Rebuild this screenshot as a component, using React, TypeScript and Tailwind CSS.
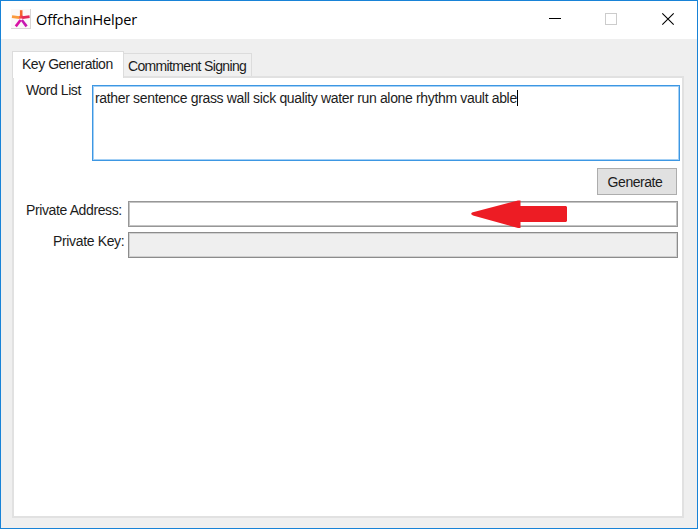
import React from "react";

function Logo() {
  return (
    <svg className="ml-[10px] h-[20px] w-[20px] shrink-0" viewBox="0 0 20 20">
      <defs>
        <linearGradient id="flare" x1="0" y1="0" x2="1" y2="0.3">
          <stop offset="0" stopColor="#fb8a3c" />
          <stop offset="0.5" stopColor="#f4473f" />
          <stop offset="1" stopColor="#e3265c" />
        </linearGradient>
      </defs>
      <rect width="20" height="20" fill="#d9d6d6" />
      <rect width="19" height="19" fill="#fbf8f8" />
      <g fill="none" strokeWidth="2.6">
        <path d="M1 7.6 8.5 8.6" stroke="#fb9a3c" />
        <path d="M10.2 1.2V8" stroke="#f5642c" />
        <path d="M18.6 7.6 11.5 8.6" stroke="#e3285a" />
        <path d="M9.6 11 4.8 17.4" stroke="#d911a5" />
        <path d="M10.8 11 15.6 17.4" stroke="#c818b0" />
      </g>
      <path d="M7.6 7.4 10.2 6 12.8 7.4 12 9.8 10.2 9.6 8.4 9.8Z" fill="url(#flare)" />
    </svg>
  );
}

function TitleBar() {
  return (
    <header className="flex h-[38px] items-start bg-white pt-[8px]">
      <Logo />
      <h1 className="ml-[5px] font-['Open_Sans',sans-serif] text-[14.5px] leading-[21px] tracking-[-0.13px] whitespace-nowrap text-black">
        OffchainHelper
      </h1>
      <svg className="ml-auto h-[20px] w-[157px] shrink-0" viewBox="540 9 157 20" fill="none">
        <path d="M549 18.5h12" stroke="#000" />
        <rect x="605.5" y="13.5" width="11" height="11" stroke="#cccccc" />
        <path d="M662.3 13.3 673.7 24.7M673.7 13.3 662.3 24.7" stroke="#000" strokeWidth="1.1" />
      </svg>
    </header>
  );
}

function Arrow() {
  return (
    <svg className="absolute top-[-3px] left-[341px] h-[29px] w-[98px]" viewBox="470 199 98 29">
      <path
        d="M472 212.5 518 200.5H520.5V206H566L567 207V221L566 222H520.5V228H518L473 215.5 471 214Z"
        fill="#ed1c24"
      />
    </svg>
  );
}

export default function App() {
  return (
    <div className="h-[530px] w-[699px] bg-white">
      <div className="flex h-[529px] w-[698px] flex-col border border-[#1883d7] bg-[#efefef] font-['Liberation_Sans',Arial,sans-serif] text-[14px] leading-[16px] whitespace-nowrap text-[#1c1c1c]">
        <TitleBar />
        <main className="flex flex-col pt-[12px] pl-[11px]">
          <nav className="z-10 flex h-[27px] items-end">
            <div className="h-[27px] w-[112px] border border-b-0 border-[#dcdcdc] bg-white pt-[4px] pl-[9px] tracking-[-0.47px]">
              Key Generation
            </div>
            <div className="mb-[2px] h-[23px] w-[128px] border border-b-0 border-l-0 border-[#dcdcdc] bg-[#f0f0f0] pt-[4px] pl-[4px] tracking-[-0.65px]">
              Commitment Signing
            </div>
          </nav>
          <section className="mt-[-2px] h-[442px] w-[672px] border-2 border-[#e1e1e1] bg-white pt-[4px]">
            <div className="flex">
              <label className="w-[78px] pl-[12px] tracking-[-0.45px]">Word List</label>
              <div className="mt-[3px] h-[76px] w-[588px] border border-[#3d97e3] bg-white pt-[4px] pl-[2px] shadow-[inset_0_0_0_1px_#a4d0f5]">
                <span className="inline-block border-r border-black tracking-[-0.34px]">
                  rather sentence grass wall sick quality water run alone rhythm vault able
                </span>
              </div>
            </div>
            <button className="mt-[7px] ml-[583px] block h-[27px] w-[80px] border border-[#adadad] bg-[#e1e1e1] pr-[4px] text-center tracking-[-0.45px]">
              Generate
            </button>
            <div className="mt-[6px] flex">
              <label className="w-[114px] pt-[1px] pl-[12px] tracking-[-0.38px]">Private Address:</label>
              <div className="relative h-[26px] w-[550px] border border-[#979797] bg-white shadow-[inset_0_0_0_1px_#c4c4c4]">
                <Arrow />
              </div>
            </div>
            <div className="mt-[5px] flex">
              <label className="w-[114px] pt-[1px] pl-[39px] tracking-[-0.35px]">Private Key:</label>
              <div className="h-[26px] w-[550px] border border-[#8c8c8c] bg-[#efefef] shadow-[inset_0_0_0_1px_#d0d0d0]" />
            </div>
          </section>
        </main>
      </div>
    </div>
  );
}
